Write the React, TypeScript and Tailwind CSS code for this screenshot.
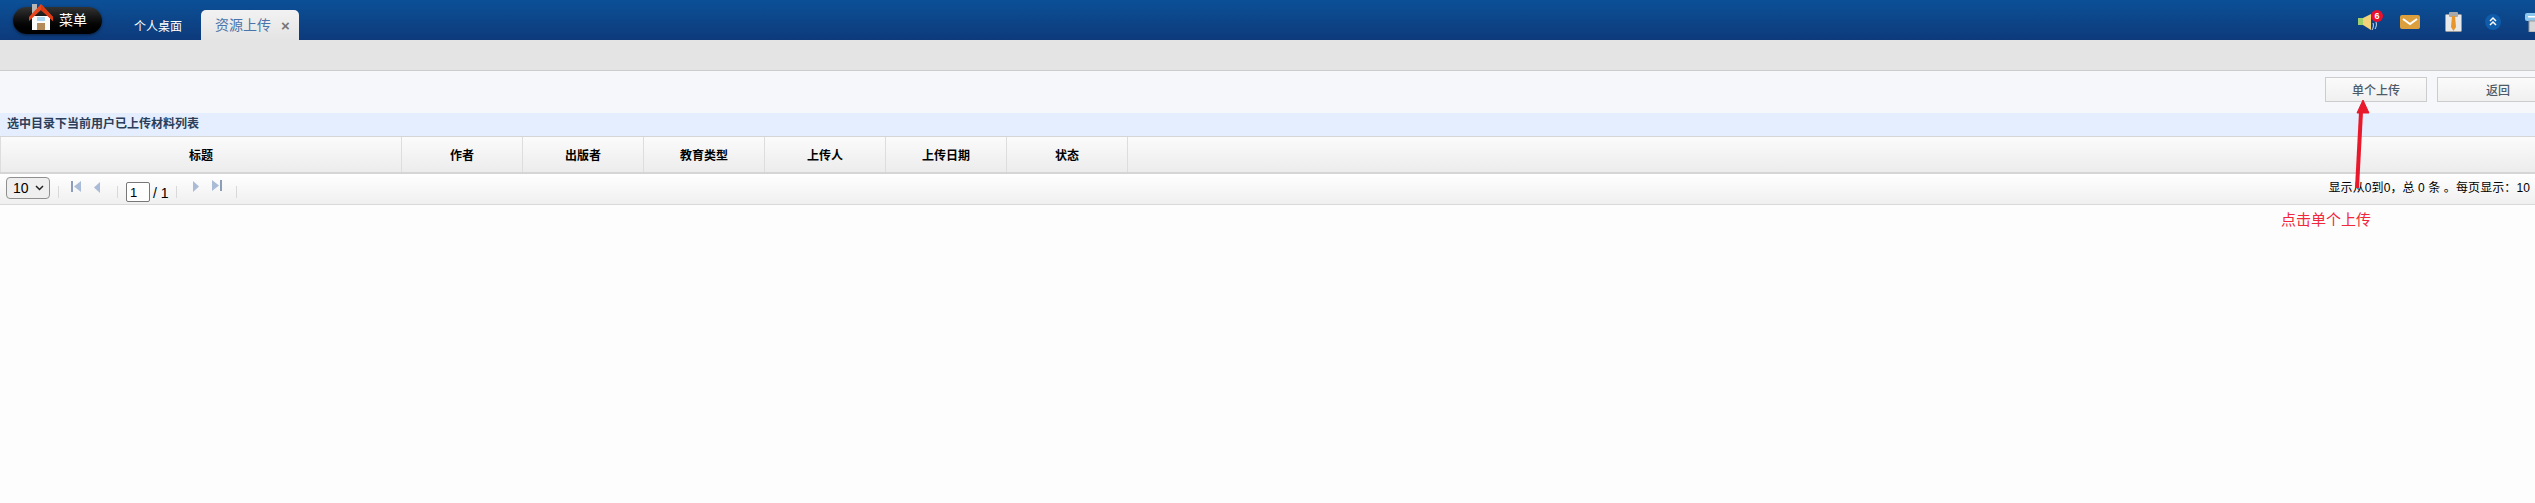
import React from "react";

const font = { fontFamily: '"Liberation Sans", "Noto Sans CJK SC", sans-serif' };

function Home() {
  return (
    <svg width="26" height="29" viewBox="0 0 26 29" className="absolute left-[15px] top-[-5px]">
      <rect x="4" y="2" width="5" height="10" fill="#b5b5b5" />
      <path d="M4 14h18v14H4z" fill="#fafafa" />
      <path d="M1 15 13 2l12 13v4L13 8 1 19z" fill="#e8471d" />
      <path d="M13 2l12 13v4L13 8z" fill="#d93a12" />
      <rect x="9" y="15" width="8" height="4" fill="#a9d3ee" />
      <rect x="9" y="21" width="8" height="7" fill="#b58a5a" />
    </svg>
  );
}

function Speaker() {
  return (
    <svg width="26" height="22" viewBox="0 0 26 22" className="mr-[16px] mb-[2px]">
      <path d="M0 8h5v7H0z" fill="#9fcf6a" />
      <path d="M5 8 13 4v16l-8-5z" fill="#f3d27a" />
      <path d="M15 13c1 3 0 5-1 7M18 12c1 3 0 5-1 7" stroke="#d7e3f0" strokeWidth="1" fill="none" />
      <circle cx="19" cy="6" r="6" fill="#e8112d" />
      <text x="19" y="9" fontSize="9" fontWeight="700" fill="#fff" textAnchor="middle">6</text>
    </svg>
  );
}

function Mail() {
  return (
    <svg width="20" height="14" viewBox="0 0 20 14" className="mr-[25px]">
      <rect width="20" height="14" rx="2" fill="#dc9f3d" />
      <path d="M3 4l7 5 7-5" stroke="#fff" strokeWidth="2" fill="none" />
    </svg>
  );
}

function Board() {
  return (
    <svg width="17" height="20" viewBox="0 0 17 20" className="mr-[23px]">
      <rect x="0.500" y="2.500" width="16" height="17" rx="1" fill="#e9e9e9" stroke="#9a9a9a" />
      <rect x="4" y="0" width="9" height="5" rx="1" fill="#a8a8a8" />
      <path d="M7 4h3l1 11-2.500 4L6 15z" fill="#e8962a" />
    </svg>
  );
}

function Up() {
  return (
    <svg width="16" height="16" viewBox="0 0 16 16" className="mr-[24px]">
      <circle cx="8" cy="8" r="8" fill="#0f5cab" />
      <path d="M5 7l3-3 3 3M5 11l3-3 3 3" stroke="#fff" strokeWidth="1.500" fill="none" />
    </svg>
  );
}

function Last() {
  return (
    <svg width="20" height="20" viewBox="0 0 20 20" className="shrink-0 -mr-[10px]">
      <rect y="1" width="20" height="8" rx="2" fill="#8cc7ee" />
      <rect x="4" y="9" width="14" height="11" fill="#d7d7d7" stroke="#9a9a9a" />
      <rect x="3" y="4" width="14" height="1.500" fill="#fff" />
    </svg>
  );
}

function PagerIcon({ dir, bar }: { dir: "l" | "r"; bar?: boolean }) {
  return (
    <svg width="10" height="11" viewBox="0 0 10 11" className="block">
      {dir === "l" ? (
        <>
          {bar && <rect x="0" y="0" width="2" height="11" fill="#8b9db8" />}
          <path d={bar ? "M10 0v11L3 5.500z" : "M8 0v11L2 5.500z"} fill="#a9bbd6" />
        </>
      ) : (
        <>
          {bar && <rect x="8" y="0" width="2" height="11" fill="#8b9db8" />}
          <path d={bar ? "M0 0v11l7-5.500z" : "M2 0v11l6-5.500z"} fill="#a9bbd6" />
        </>
      )}
    </svg>
  );
}

const cols = ["作者", "出版者", "教育类型", "上传人", "上传日期", "状态"];

export default function App() {
  return (
    <div className="relative w-full h-[503px] overflow-hidden bg-[#fdfdfd] text-[12px]" style={font}>
      <header className="h-10 flex items-end bg-gradient-to-b from-[#0b5097] to-[#0d3a7b]">
        <div className="relative self-start mt-[7px] ml-[13px] w-[89px] h-[27px] rounded-full bg-gradient-to-b from-[#333333] to-[#000000] shadow-[0_1px_3px_rgba(0,0,0,0.5)] flex items-center justify-end pr-[15px] text-[14px] text-white">
          <Home />
          <span>菜单</span>
        </div>
        <span className="ml-[32px] mb-[4px] w-[48px] text-white whitespace-nowrap">个人桌面</span>
        <div className="ml-[19px] w-[98px] h-[30px] rounded-t-[5px] bg-gradient-to-b from-[#f2f2f2] to-[#e4e4e4] flex items-center pl-[14px] text-[14px] text-[#4a74ab]">
          <span>资源上传</span>
          <span className="ml-[10px] text-[15px] font-bold text-[#777777] leading-none">×</span>
        </div>
        <div className="ml-auto self-start mt-[10px] flex items-center h-6">
          <Speaker />
          <Mail />
          <Board />
          <Up />
          <Last />
        </div>
      </header>

      <div className="h-[31px] bg-[#e4e4e4] border-b border-[#cccccc]" />

      <div className="h-[42px] bg-[#f5f7fa] flex justify-end items-start pt-[6px] -mr-[24px]">
        <button className="w-[102px] h-[25px] pt-[2px] border border-[#cccccc] bg-gradient-to-b from-[#fbfbfb] to-[#f0f0f0] font-medium text-[#4d5b68]">单个上传</button>
        <button className="ml-[10px] w-[122px] h-[25px] pt-[2px] border border-[#cccccc] bg-gradient-to-b from-[#fbfbfb] to-[#f0f0f0] font-medium text-[#4d5b68]">返回</button>
      </div>

      <div className="h-[23px] bg-[#e4eefe] pl-[7px] pb-[2px] flex items-center font-bold text-[#2c3e5a]">选中目录下当前用户已上传材料列表</div>

      <div className="h-[38px] flex pt-[3px] border-t border-[#d5d5d5] border-b-2 border-b-[#d5d5d5] bg-gradient-to-b from-[#fbfbfb] to-[#ececec] font-bold text-black">
        <div className="w-[402px] -mt-[3px] pt-[3px] flex items-center justify-center border-r border-[#dddddd] border-l">标题</div>
        {cols.map((c) => (
          <div key={c} className="w-[121px] -mt-[3px] pt-[3px] flex items-center justify-center border-r border-[#dddddd]">{c}</div>
        ))}
      </div>

      <div className="h-[31px] flex items-start pt-[3px] border-b border-[#d9d9d9] bg-gradient-to-b from-[#ffffff] to-[#f0f0f0] text-black">
        <div className="relative ml-[6px] w-[44px] h-[22px]">
          <select className="appearance-none w-full h-full border border-[#8f8f8f] rounded-[4px] text-[14px] bg-[#efefef] pl-[6px]" defaultValue="10">
            <option>10</option>
          </select>
          <svg className="absolute right-[6px] top-[8px] pointer-events-none" width="9" height="6" viewBox="0 0 9 6">
            <path d="M1 1l3.500 3.500L8 1" stroke="#222" strokeWidth="1.500" fill="none" />
          </svg>
        </div>
        <span className="block ml-[8px] mt-[9px] w-px h-[12px] bg-[#d9d9d9]" />
        <span className="block ml-[12px] mt-[4px]"><PagerIcon dir="l" bar /></span>
        <span className="block ml-[11px] mt-[5px]"><PagerIcon dir="l" /></span>
        <span className="block ml-[15px] mt-[9px] w-px h-[12px] bg-[#d9d9d9]" />
        <input className="ml-[8px] mt-[5px] w-[24px] h-[20px] border border-[#777777] rounded-[2px] bg-white text-[13px] pl-[3px]" defaultValue="1" />
        <span className="block ml-[3px] w-[16px] mt-[6px] text-[14px] leading-[20px] whitespace-nowrap">/ 1</span>
        <span className="block ml-[7px] mt-[9px] w-px h-[12px] bg-[#d9d9d9]" />
        <span className="block ml-[14px] mt-[4px]"><PagerIcon dir="r" /></span>
        <span className="block ml-[11px] mt-[3px]"><PagerIcon dir="r" bar /></span>
        <span className="block ml-[14px] mt-[9px] w-px h-[12px] bg-[#d9d9d9]" />
        <span className="ml-auto mr-[5px] mt-[2px] tracking-[0.1px] whitespace-nowrap">显示从0到0，总 0 条 。每页显示：10</span>
      </div>

      <svg className="absolute left-[2345px] top-[98px]" width="30" height="92" viewBox="0 0 30 92">
        <path d="M12 90 16 14" stroke="#e8192c" strokeWidth="4" fill="none" />
        <path d="M18 2 24 15 12 15z" fill="#e8192c" stroke="#e8192c" />
      </svg>
      <span className="absolute left-[2281px] top-[209px] text-[15px] leading-[22px] text-[#f0283c] whitespace-nowrap">点击单个上传</span>
    </div>
  );
}
